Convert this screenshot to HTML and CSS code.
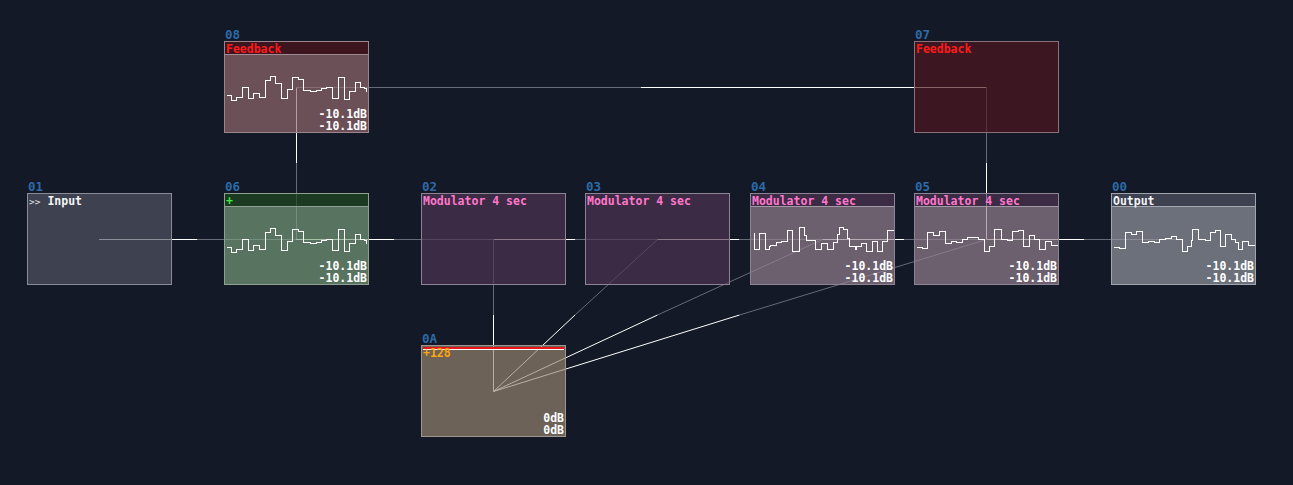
FILE: index.html
```html
<!DOCTYPE html>
<html lang="en">
<head>
  <meta charset="UTF-8">
  <title>Patch</title>
  <link rel="stylesheet" href="styles.css">
</head>
<body>
  <div class="canvas">
    <!-- wires sit under the nodes, the node fills are translucent -->
    <svg class="wires" width="1293" height="485" viewBox="0 0 1293 485">
      <g class="hot">
        <path d="M99 239.5 H197.5"/>
        <path d="M296 239.5 H394.5"/>
        <path d="M493 239.5 H575"/>
        <path d="M657 239.5 H739.5"/>
        <path d="M822 239.5 H904"/>
        <path d="M986 239.5 H1084.5"/>
        <path d="M986 87.5 H641"/>
        <path d="M986.5 239 V163"/>
        <path d="M296.5 87 V163"/>
        <path d="M493.5 391 V315"/>
        <path d="M493.5 391.5 L575 315"/>
        <path d="M493.5 391.5 L657.5 315"/>
        <path d="M493.5 391.5 L739.5 315"/>
      </g>
      <g class="cold">
        <path d="M197.5 239.5 H296"/>
        <path d="M394.5 239.5 H493"/>
        <path d="M575 239.5 H657"/>
        <path d="M739.5 239.5 H822"/>
        <path d="M904 239.5 H986"/>
        <path d="M1084.5 239.5 H1183"/>
        <path d="M641 87.5 H296"/>
        <path d="M986.5 163 V87"/>
        <path d="M296.5 163 V239"/>
        <path d="M493.5 315 V239"/>
        <path d="M575 315 L657.5 239.5"/>
        <path d="M657.5 315 L822.5 239.5"/>
        <path d="M739.5 315 L986.5 239.5"/>
      </g>
    </svg>

    <div class="node feedback-open n08">
      <span class="node-id">08</span>
      <div class="node-head t-red">Feedback</div>
      <div class="node-body">
        <svg class="wave" width="143" height="52" viewBox="1 14 143 52"><path d="M2 54 H7 V59 H12 V56 H18 V46 H24 V57 H29 V52 H35 V56 H41 V39 H46 V35 H51 V42 H57 V57 H63 V48 H68 V36 H74 V38 H79 V49 H86 V50 H92 V49 H97 V47 H102 V46 H108 V57 H114 V36 H120 V58 H125 V50 H131 V41 H136 V46 H140 V47 H142 V50"/></svg>
        <div class="levels"><div>-10.1dB</div><div>-10.1dB</div></div>
      </div>
    </div>

    <div class="node feedback n07">
      <span class="node-id">07</span>
      <div class="node-head t-red">Feedback</div>
      <div class="node-body"></div>
    </div>

    <div class="node slate n01">
      <span class="node-id">01</span>
      <div class="node-head t-white"><span class="arrows">&gt;&gt;</span> Input</div>
      <div class="node-body"></div>
    </div>

    <div class="node mixer n06">
      <span class="node-id">06</span>
      <div class="node-head t-green">+</div>
      <div class="node-body">
        <svg class="wave" width="143" height="52" viewBox="1 14 143 52"><path d="M2 54 H7 V59 H12 V56 H18 V46 H24 V57 H29 V52 H35 V56 H41 V39 H46 V35 H51 V42 H57 V57 H63 V48 H68 V36 H74 V38 H79 V49 H86 V50 H92 V49 H97 V47 H102 V46 H108 V57 H114 V36 H120 V58 H125 V50 H131 V41 H136 V46 H140 V47 H142 V50"/></svg>
        <div class="levels"><div>-10.1dB</div><div>-10.1dB</div></div>
      </div>
    </div>

    <div class="node mod n02">
      <span class="node-id">02</span>
      <div class="node-head t-pink">Modulator 4 sec</div>
      <div class="node-body"></div>
    </div>

    <div class="node mod n03">
      <span class="node-id">03</span>
      <div class="node-head t-pink">Modulator 4 sec</div>
      <div class="node-body"></div>
    </div>

    <div class="node mod-open n04">
      <span class="node-id">04</span>
      <div class="node-head t-pink">Modulator 4 sec</div>
      <div class="node-body">
        <svg class="wave" width="143" height="52" viewBox="1 14 143 52"><path d="M3 40 H4 V56 H9 V40 H15 V56 H19 V53 H20 V52 H26 V49 H31 V48 H37 V37 H42 V58 H49 V34 H54 V42 H56 V47 H65 V56 H71 V50 H77 V56 H83 V49 H87 V41 H89 V34 H93 V36 H97 V45 H99 V53 H105 V56 H106 V53 H111 V50 H116 V58 H122 V48 H127 V58 H132 V48 H137 V37 H143"/></svg>
        <div class="levels"><div>-10.1dB</div><div>-10.1dB</div></div>
      </div>
    </div>

    <div class="node mod-open n05">
      <span class="node-id">05</span>
      <div class="node-head t-pink">Modulator 4 sec</div>
      <div class="node-body">
        <svg class="wave" width="143" height="52" viewBox="1 14 143 52"><path d="M2 54 H8 V55 H13 V39 H19 V42 H25 V38 H31 V50 H37 V48 H42 V49 H48 V46 H53 V44 H64 V46 H70 V58 H75 V53 H80 V36 H87 V46 H93 V47 H98 V38 H104 V37 H109 V53 H115 V42 H120 V46 H125 V56 H131 V48 H137 V52 H143"/></svg>
        <div class="levels"><div>-10.1dB</div><div>-10.1dB</div></div>
      </div>
    </div>

    <div class="node output n00">
      <span class="node-id">00</span>
      <div class="node-head t-white">Output</div>
      <div class="node-body">
        <svg class="wave" width="143" height="52" viewBox="1 14 143 52"><path d="M2 54 H8 V55 H14 V39 H20 V41 H25 V38 H31 V49 H37 V48 H43 V49 H48 V46 H54 V45 H60 V43 H65 V46 H71 V58 H76 V53 H80 V47 H81 V36 H87 V46 H94 V47 H99 V39 H104 V37 H109 V53 H114 V41 H120 V46 H124 V49 H127 V56 H131 V48 H137 V52 H143"/></svg>
        <div class="levels"><div>-10.1dB</div><div>-10.1dB</div></div>
      </div>
    </div>

    <div class="node seq n0a">
      <span class="node-id">0A</span>
      <div class="node-head t-orange">+128</div>
      <div class="node-body">
        <div class="levels"><div>0dB</div><div>0dB</div></div>
      </div>
    </div>
  </div>
</body>
</html>
```

FILE: styles.css
```css
body {
  margin: 0;
  background: #131926;
  font-family: "DejaVu Sans Mono", "Liberation Mono", monospace;
  font-weight: bold;
  font-size: 11.5px;
  color: #fff;
}
.canvas {
  position: relative;
  width: 1293px;
  height: 485px;
  overflow: hidden;
}
.wires {
  position: absolute;
  left: 0;
  top: 0;
}
.wires path {
  fill: none;
  stroke-width: 1;
}
.wires .hot path {
  stroke: #ffffff;
}
.wires .cold path {
  stroke: #676b77;
}

/* nodes */
.node {
  position: absolute;
  width: 145px;
  height: 92px;
  box-sizing: border-box;
  border: 1px solid #8a8d97;
  display: flex;
  flex-direction: column;
}
.node-id {
  position: absolute;
  left: 0;
  top: -13px;
  font-size: 12.5px;
  line-height: 12px;
  color: #2d6aa6;
}
.node-head {
  height: 11px;
  padding: 1px 0 0 1px;
  line-height: 12px;
  border-bottom: 1px solid transparent;
  white-space: pre;
}
.node-body {
  flex: 1;
  display: flex;
  flex-direction: column;
}
.wave {
  display: block;
}
.wave path {
  fill: none;
  stroke: #fff;
  stroke-width: 1;
  shape-rendering: crispEdges;
  transform: translate(0.5px, 0.5px);
}
.levels {
  margin-top: auto;
  text-align: right;
  line-height: 12px;
  padding-right: 1px;
}

.t-red { color: #ff1a1a; }
.t-pink { color: #ff78cc; }
.t-white { color: #f4f4f4; }
.t-green { color: #3ef03e; }
.t-orange { color: #ffa60a; }
.arrows { color: #e0e0e4; font-weight: normal; font-size: 9.5px; }

/* themes */
.slate .node-head,
.slate .node-body {
  background: rgba(82, 85, 101, 0.67);
}
.feedback-open { border-color: #9c848c; }
.feedback-open .node-head {
  background: rgba(80, 19, 29, 0.67);
  border-bottom-color: #a08c92;
}
.feedback-open .node-body { background: rgba(152, 107, 113, 0.67); }
.feedback { border-color: #8c7078; }
.feedback .node-head,
.feedback .node-body {
  background: rgba(80, 22, 32, 0.67);
}
.mixer { border-color: #8fa08f; }
.mixer .node-head {
  background: rgba(31, 74, 32, 0.67);
  border-bottom-color: #8ea08f;
}
.mixer .node-body { background: rgba(122, 161, 125, 0.67); }
.mod { border-color: #8c8494; }
.mod .node-head,
.mod .node-body {
  background: rgba(80, 52, 84, 0.67);
}
.mod-open { border-color: #8c8494; }
.mod-open .node-head {
  background: rgba(80, 52, 84, 0.67);
  border-bottom-color: #a49aa6;
}
.mod-open .node-body { background: rgba(152, 131, 146, 0.67); }
.output { border-color: #a0a4ac; }
.output .node-head {
  background: rgba(82, 85, 101, 0.67);
  border-bottom-color: #a4a8b0;
}
.output .node-body { background: rgba(152, 155, 164, 0.67); }
.seq { border-color: #9c968e; }
.seq .node-head {
  background:
    linear-gradient(#e8161b, #e8161b) 1px 1px / 141px 2px no-repeat,
    linear-gradient(#fff, #fff) 1px 3px / 141px 1px no-repeat,
    rgba(152, 134, 113, 0.67);
}
.seq .node-body { background: rgba(152, 134, 113, 0.67); }

/* places on the patch canvas */
.n08 { left: 224px; top: 41px; }
.n07 { left: 914px; top: 41px; }
.n01 { left: 27px; top: 193px; }
.n06 { left: 224px; top: 193px; }
.n02 { left: 421px; top: 193px; }
.n03 { left: 585px; top: 193px; }
.n04 { left: 750px; top: 193px; }
.n05 { left: 914px; top: 193px; }
.n00 { left: 1111px; top: 193px; }
.n0a { left: 421px; top: 345px; }
```
